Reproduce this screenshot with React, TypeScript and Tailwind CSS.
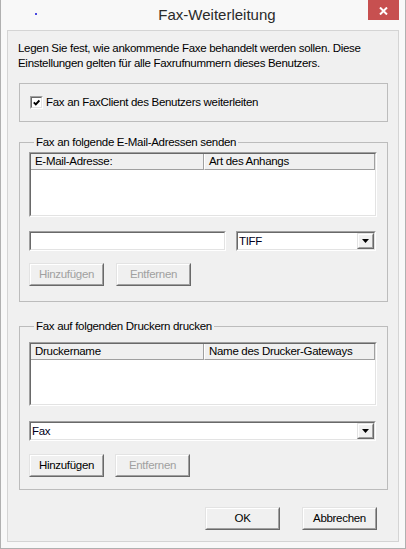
import type { ReactNode } from 'react'

// classic 3D edges used by inputs, list views and buttons
const Sunken = ({ className = '', children }: { className?: string; children?: ReactNode }) => (
  <div className={`border border-t-[#a0a0a0] border-l-[#a0a0a0] border-b-white border-r-white ${className}`}>
    <div className="h-full border border-t-[#696969] border-l-[#696969] border-b-[#e3e3e3] border-r-[#e3e3e3] bg-white">
      {children}
    </div>
  </div>
)

const PushButton = ({ label, disabled = false }: { label: string; disabled?: boolean }) => (
  <button
    type="button"
    className="block h-[23px] w-[75px] border border-t-[#e3e3e3] border-l-[#e3e3e3] border-b-[#696969] border-r-[#696969]"
  >
    <span className="flex h-full items-center justify-center border border-t-white border-l-white border-b-[#a0a0a0] border-r-[#a0a0a0] bg-[#f0f0f0]">
      <span className={disabled ? 'text-[#a0a0a0]' : 'text-black'}>{label}</span>
    </span>
  </button>
)

const DropArrow = () => (
  <div className="h-full w-[17px] border border-t-[#e3e3e3] border-l-[#e3e3e3] border-b-[#696969] border-r-[#696969]">
    <div className="flex h-full items-center justify-center border border-t-white border-l-white border-b-[#a0a0a0] border-r-[#a0a0a0] bg-[#f0f0f0]">
      <svg width="7" height="4" viewBox="0 0 7 4">
        <polygon points="0,0 7,0 3.5,4" fill="#000" />
      </svg>
    </div>
  </div>
)

const ComboBox = ({ value, className = '' }: { value: string; className?: string }) => (
  <Sunken className={`h-[20px] ${className}`}>
    <div className="flex h-full items-center">
      <span className="flex-1 pl-[1px] text-[#000020]">{value}</span>
      <DropArrow />
    </div>
  </Sunken>
)

const ListView = ({ columns, height }: { columns: [string, string]; height: string }) => (
  <Sunken className={`w-[348px] ${height}`}>
    <div className="flex h-[16px] bg-[#f0f0f0]">
      <div className="w-[173px] border-b border-r border-b-[#a0a0a0] border-r-[#a0a0a0] pl-[4px]">{columns[0]}</div>
      <div className="w-[171px] border-b border-l border-r border-b-[#a0a0a0] border-l-white border-r-[#a0a0a0] pl-[4px]">
        {columns[1]}
      </div>
    </div>
  </Sunken>
)

const GroupBox = ({ title, className = '', children }: { title: string; className?: string; children: ReactNode }) => (
  <fieldset className={`ml-[11px] w-[369px] border border-[#bcbcbc] pl-[9px] ${className}`}>
    <legend className="ml-[5px] px-[2px]">{title}</legend>
    {children}
  </fieldset>
)

export default function App() {
  return (
    <div className="h-[549px] w-[406px] border-x border-b border-[#b0b0b0] bg-[#f8f8f8] font-['Liberation_Sans',Arial,sans-serif] text-[11.5px] leading-[15px] tracking-[-0.3px] text-black">
      {/* title bar */}
      <div className="flex h-[30px]">
        <div className="flex-1 pl-[34px] pt-[13px]">
          <div className="h-[2px] w-[2px] bg-[#4848e0]" />
        </div>
        <div className="text-[15px] leading-[30px] tracking-normal text-[#2a2a2a]">Fax-Weiterleitung</div>
        <div className="flex flex-1 items-start justify-end pr-[6px]">
          <div className="flex h-[20px] w-[31px] justify-center bg-[#c75050] pt-[7px]">
            <svg width="9" height="8" viewBox="0 0 9 8">
              <path d="M1 0.5 L8 7.5 M8 0.5 L1 7.5" stroke="#fff" strokeWidth="2" />
            </svg>
          </div>
        </div>
      </div>

      {/* client area */}
      <div className="mx-[6px] flex h-[512px] flex-col border border-[#d4d4d4] bg-[#f0f0f0]">
        <p className="pl-[10px] pt-[10px]">
          Legen Sie fest, wie ankommende Faxe behandelt werden sollen. Diese
          <br />
          Einstellungen gelten für alle Faxrufnummern dieses Benutzers.
        </p>

        <div className="ml-[11px] mt-[12px] flex h-[39px] w-[369px] items-center border border-[#bcbcbc] pl-[10px]">
          <div className="h-[13px] w-[13px] border border-t-[#a0a0a0] border-l-[#a0a0a0] border-b-white border-r-white">
            <div className="flex h-full items-center justify-center border border-t-[#696969] border-l-[#696969] border-b-[#e3e3e3] border-r-[#e3e3e3] bg-white">
              <svg width="7" height="7" viewBox="0 0 7 7">
                <path d="M0.8 3.4 L2.8 5.4 L6.4 1.4" stroke="#000" strokeWidth="1.9" fill="none" />
              </svg>
            </div>
          </div>
          <span className="ml-[3px]">Fax an FaxClient des Benutzers weiterleiten</span>
        </div>

        <GroupBox title="Fax an folgende E-Mail-Adressen senden" className="mt-[13px] pb-[15px] pt-[2px]">
          <ListView columns={['E-Mail-Adresse:', 'Art des Anhangs']} height="h-[65px]" />
          <div className="mt-[14px] flex">
            <Sunken className="h-[20px] w-[197px]" />
            <ComboBox value="TIFF" className="ml-[10px] w-[140px]" />
          </div>
          <div className="mt-[12px] flex gap-[12px]">
            <PushButton label="Hinzufügen" disabled />
            <PushButton label="Entfernen" disabled />
          </div>
        </GroupBox>

        <GroupBox title="Fax auf folgenden Druckern drucken" className="mt-[17px] pb-[12px] pt-[8px]">
          <ListView columns={['Druckername', 'Name des Drucker-Gateways']} height="h-[64px]" />
          <ComboBox value="Fax" className="mt-[15px] w-[347px]" />
          <div className="mt-[13px] flex gap-[11px]">
            <PushButton label="Hinzufügen" />
            <PushButton label="Entfernen" disabled />
          </div>
        </GroupBox>

        <div className="mt-[17px] flex justify-end gap-[22px] pr-[21px]">
          <PushButton label="OK" />
          <PushButton label="Abbrechen" />
        </div>
      </div>
    </div>
  )
}
